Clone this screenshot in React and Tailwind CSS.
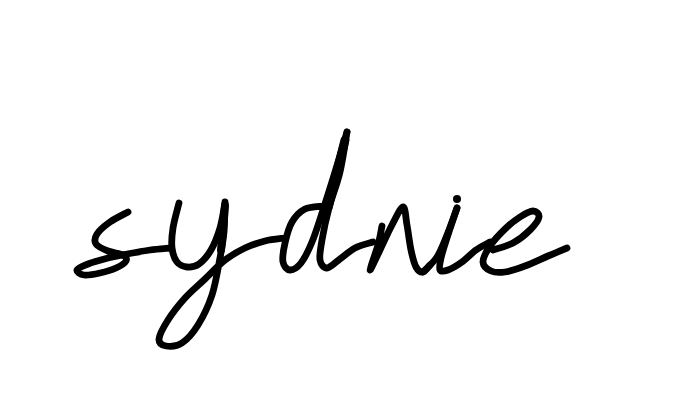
import React from 'react';

// freehand strokes of the signature, as [x, y] points on the 692x417 canvas
const strokes = [
  // s, running on into the y
  [[128, 212], [110, 222], [97, 234], [96, 244], [108, 251], [123, 255], [126, 261], [116, 268], [100, 273], [84, 275], [77, 270], [88, 264], [108, 258], [127, 254], [150, 250], [170, 248]],
  // y cup
  [[179, 203], [173, 228], [172, 248], [177, 262], [187, 267], [199, 264], [211, 250], [220, 228], [225, 203]],
  // y tail, looping back up into the d
  [[225, 202], [224, 232], [220, 258], [212, 295], [198, 325], [182, 343], [166, 346], [159, 339], [168, 320], [185, 298], [205, 279], [225, 260], [245, 248], [265, 241], [285, 238]],
  // d bowl and up stroke
  [[323, 206], [305, 209], [292, 222], [285, 243], [283, 262], [290, 270], [301, 263], [312, 242], [323, 210], [335, 172], [347, 132]],
  // d down stroke
  [[347, 132], [340, 172], [329, 208], [322, 240], [320, 260], [327, 268], [340, 259], [355, 248], [373, 242]],
  // n
  [[382, 226], [378, 245], [370, 270], [380, 250], [392, 225], [403, 207], [407, 225], [411, 250], [416, 267], [423, 272], [430, 265]],
  // i
  [[423, 272], [437, 257], [447, 235], [457, 208]],
  [[457, 208], [447, 238], [441, 258], [440, 270], [448, 270], [462, 262], [476, 250], [490, 242]],
  // e
  [[493, 250], [513, 243], [530, 230], [539, 217], [533, 211], [520, 217], [505, 229], [490, 246], [483, 262], [491, 271], [505, 272], [525, 266], [548, 256], [567, 248]],
];

function toPath(points) {
  let d = `M${points[0][0]} ${points[0][1]}`;
  for (let i = 0; i < points.length - 1; i += 1) {
    const p0 = points[i - 1] || points[i];
    const p1 = points[i];
    const p2 = points[i + 1];
    const p3 = points[i + 2] || p2;
    const c1x = p1[0] + (p2[0] - p0[0]) / 6;
    const c1y = p1[1] + (p2[1] - p0[1]) / 6;
    const c2x = p2[0] - (p3[0] - p1[0]) / 6;
    const c2y = p2[1] - (p3[1] - p1[1]) / 6;
    d += ` C${c1x} ${c1y} ${c2x} ${c2y} ${p2[0]} ${p2[1]}`;
  }
  return d;
}

export default function App() {
  return (
    <main className="h-[417px] w-[692px] overflow-hidden bg-white">
      <svg
        viewBox="0 0 692 417"
        className="block h-full w-full"
        fill="none"
        stroke="#000"
        strokeWidth="6.8"
        strokeLinecap="round"
        strokeLinejoin="round"
        role="img"
        aria-label="sydnie"
      >
        {strokes.map((points, i) => (
          <path key={i} d={toPath(points)} />
        ))}
        {/* heavier parts of the y and d down strokes */}
        <path d="M225 206 L221 250" strokeWidth="8" />
        <path d="M345 140 L328 208" strokeWidth="9" />
        <circle cx="457" cy="199" r="4" fill="#000" stroke="none" />
      </svg>
    </main>
  );
}
